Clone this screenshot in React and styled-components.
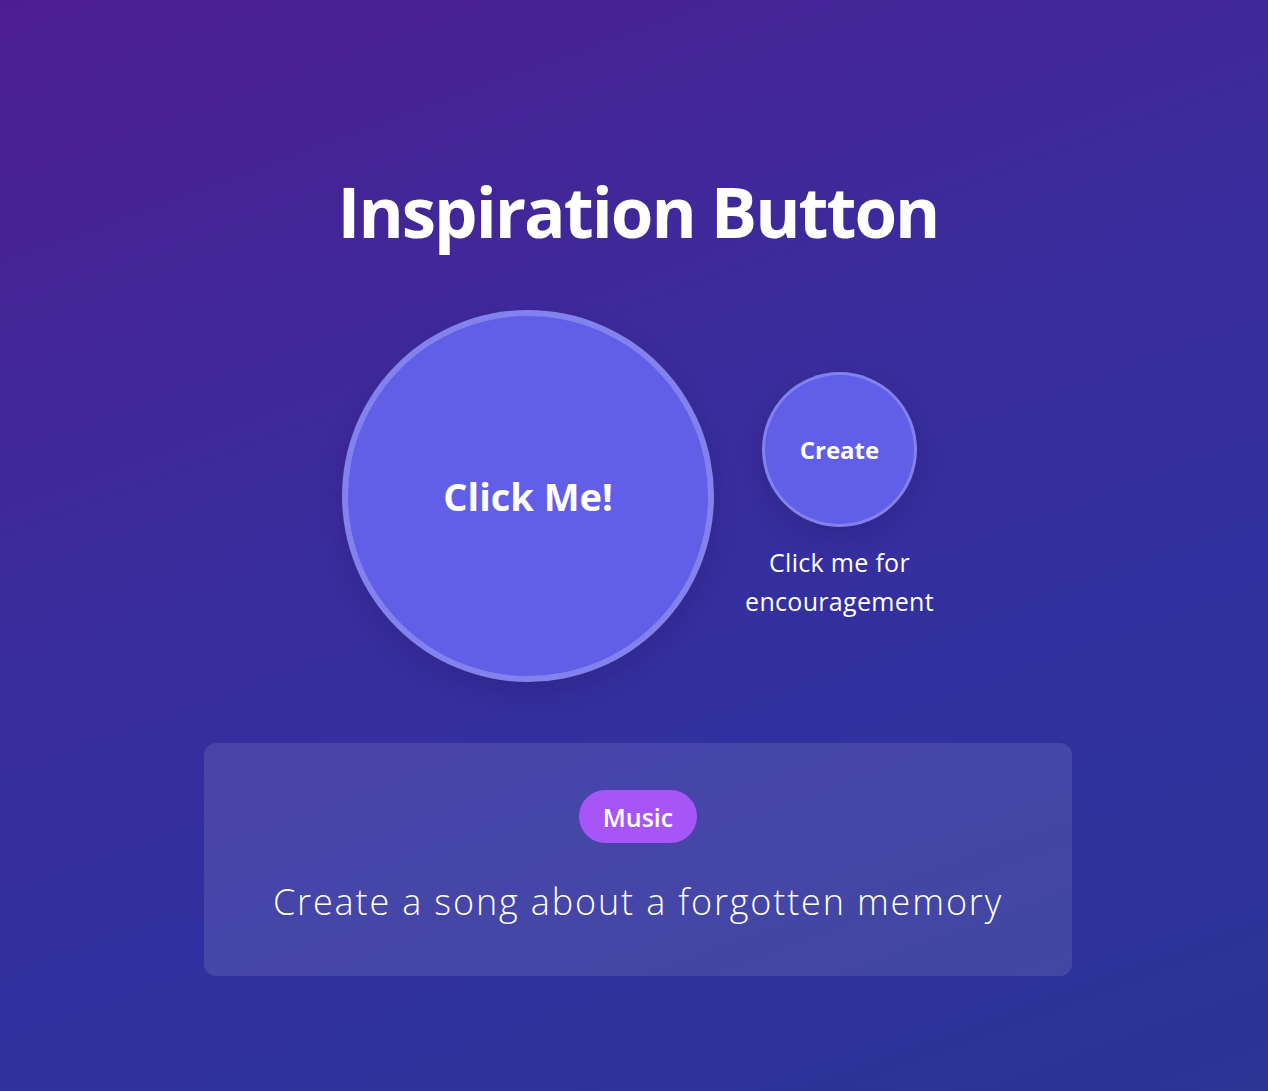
import React from "react";
import styled, { createGlobalStyle } from "styled-components";

const Global = createGlobalStyle`
  html, body {
    margin: 0;
    padding: 0;
    min-height: 100%;
  }
  body {
    min-height: 1091px;
    background: linear-gradient(160deg, #4d1e91 0%, #3b2c9c 40%, #3230a0 65%, #2a3594 100%);
    font-family: "Open Sans", "Noto Sans", sans-serif;
    color: #ffffff;
  }
`;

const Page = styled.main`
  box-sizing: border-box;
  min-height: 1091px;
  padding: 169px 0 0 8px;
  display: flex;
  flex-direction: column;
  align-items: center;
`;

const Title = styled.h1`
  margin: 0;
  font-family: "Open Sans", sans-serif;
  font-weight: 700;
  font-size: 69px;
  line-height: 84px;
  letter-spacing: -2px;
  color: #ffffff;
`;

const Row = styled.div`
  margin-top: 57px;
  display: flex;
  align-items: center;
  gap: 31px;
`;

const Circle = styled.button`
  box-sizing: border-box;
  width: ${(p) => p.$size}px;
  height: ${(p) => p.$size}px;
  border-radius: 50%;
  border: ${(p) => p.$border}px solid rgba(255, 255, 255, 0.22);
  background: #615ee8;
  color: #ffffff;
  font-family: "Open Sans", sans-serif;
  font-weight: 700;
  font-size: ${(p) => p.$font}px;
  display: flex;
  align-items: center;
  justify-content: center;
  box-shadow: 0 10px 25px rgba(20, 10, 60, 0.18);
  cursor: pointer;
  padding: 0;
`;

const Side = styled.div`
  display: flex;
  flex-direction: column;
  align-items: center;
  gap: 16px;
`;

const Caption = styled.p`
  margin: 0;
  font-family: "Open Sans", sans-serif;
  font-size: 25px;
  line-height: 39px;
  text-align: center;
  letter-spacing: 0.3px;
  color: #ffffff;
`;

const Card = styled.section`
  box-sizing: border-box;
  margin-top: 61px;
  width: 868px;
  padding: 47px 32px 48px;
  border-radius: 12px;
  background: rgba(255, 255, 255, 0.1);
  display: flex;
  flex-direction: column;
  align-items: center;
  gap: 33px;
`;

const Tag = styled.span`
  display: inline-flex;
  align-items: center;
  justify-content: center;
  height: 53px;
  padding: 0 24px;
  border-radius: 27px;
  background: #a855f7;
  font-family: "Open Sans", sans-serif;
  font-weight: 600;
  font-size: 25px;
  color: #ffffff;
`;

const Prompt = styled.p`
  margin: 0;
  font-family: "Open Sans", sans-serif;
  font-weight: 300;
  font-size: 36px;
  line-height: 52px;
  letter-spacing: 1.85px;
  text-align: center;
  color: #ffffff;
`;

export default function App() {
  return (
    <>
      <Global />
      <Page>
        <Title>Inspiration Button</Title>
        <Row>
          <Circle $size={372} $border={6} $font={38}>
            Click Me!
          </Circle>
          <Side>
            <Circle $size={155} $border={3} $font={24}>
              Create
            </Circle>
            <Caption>
              Click me for
              <br />
              encouragement
            </Caption>
          </Side>
        </Row>
        <Card>
          <Tag>Music</Tag>
          <Prompt>Create a song about a forgotten memory</Prompt>
        </Card>
      </Page>
    </>
  );
}
